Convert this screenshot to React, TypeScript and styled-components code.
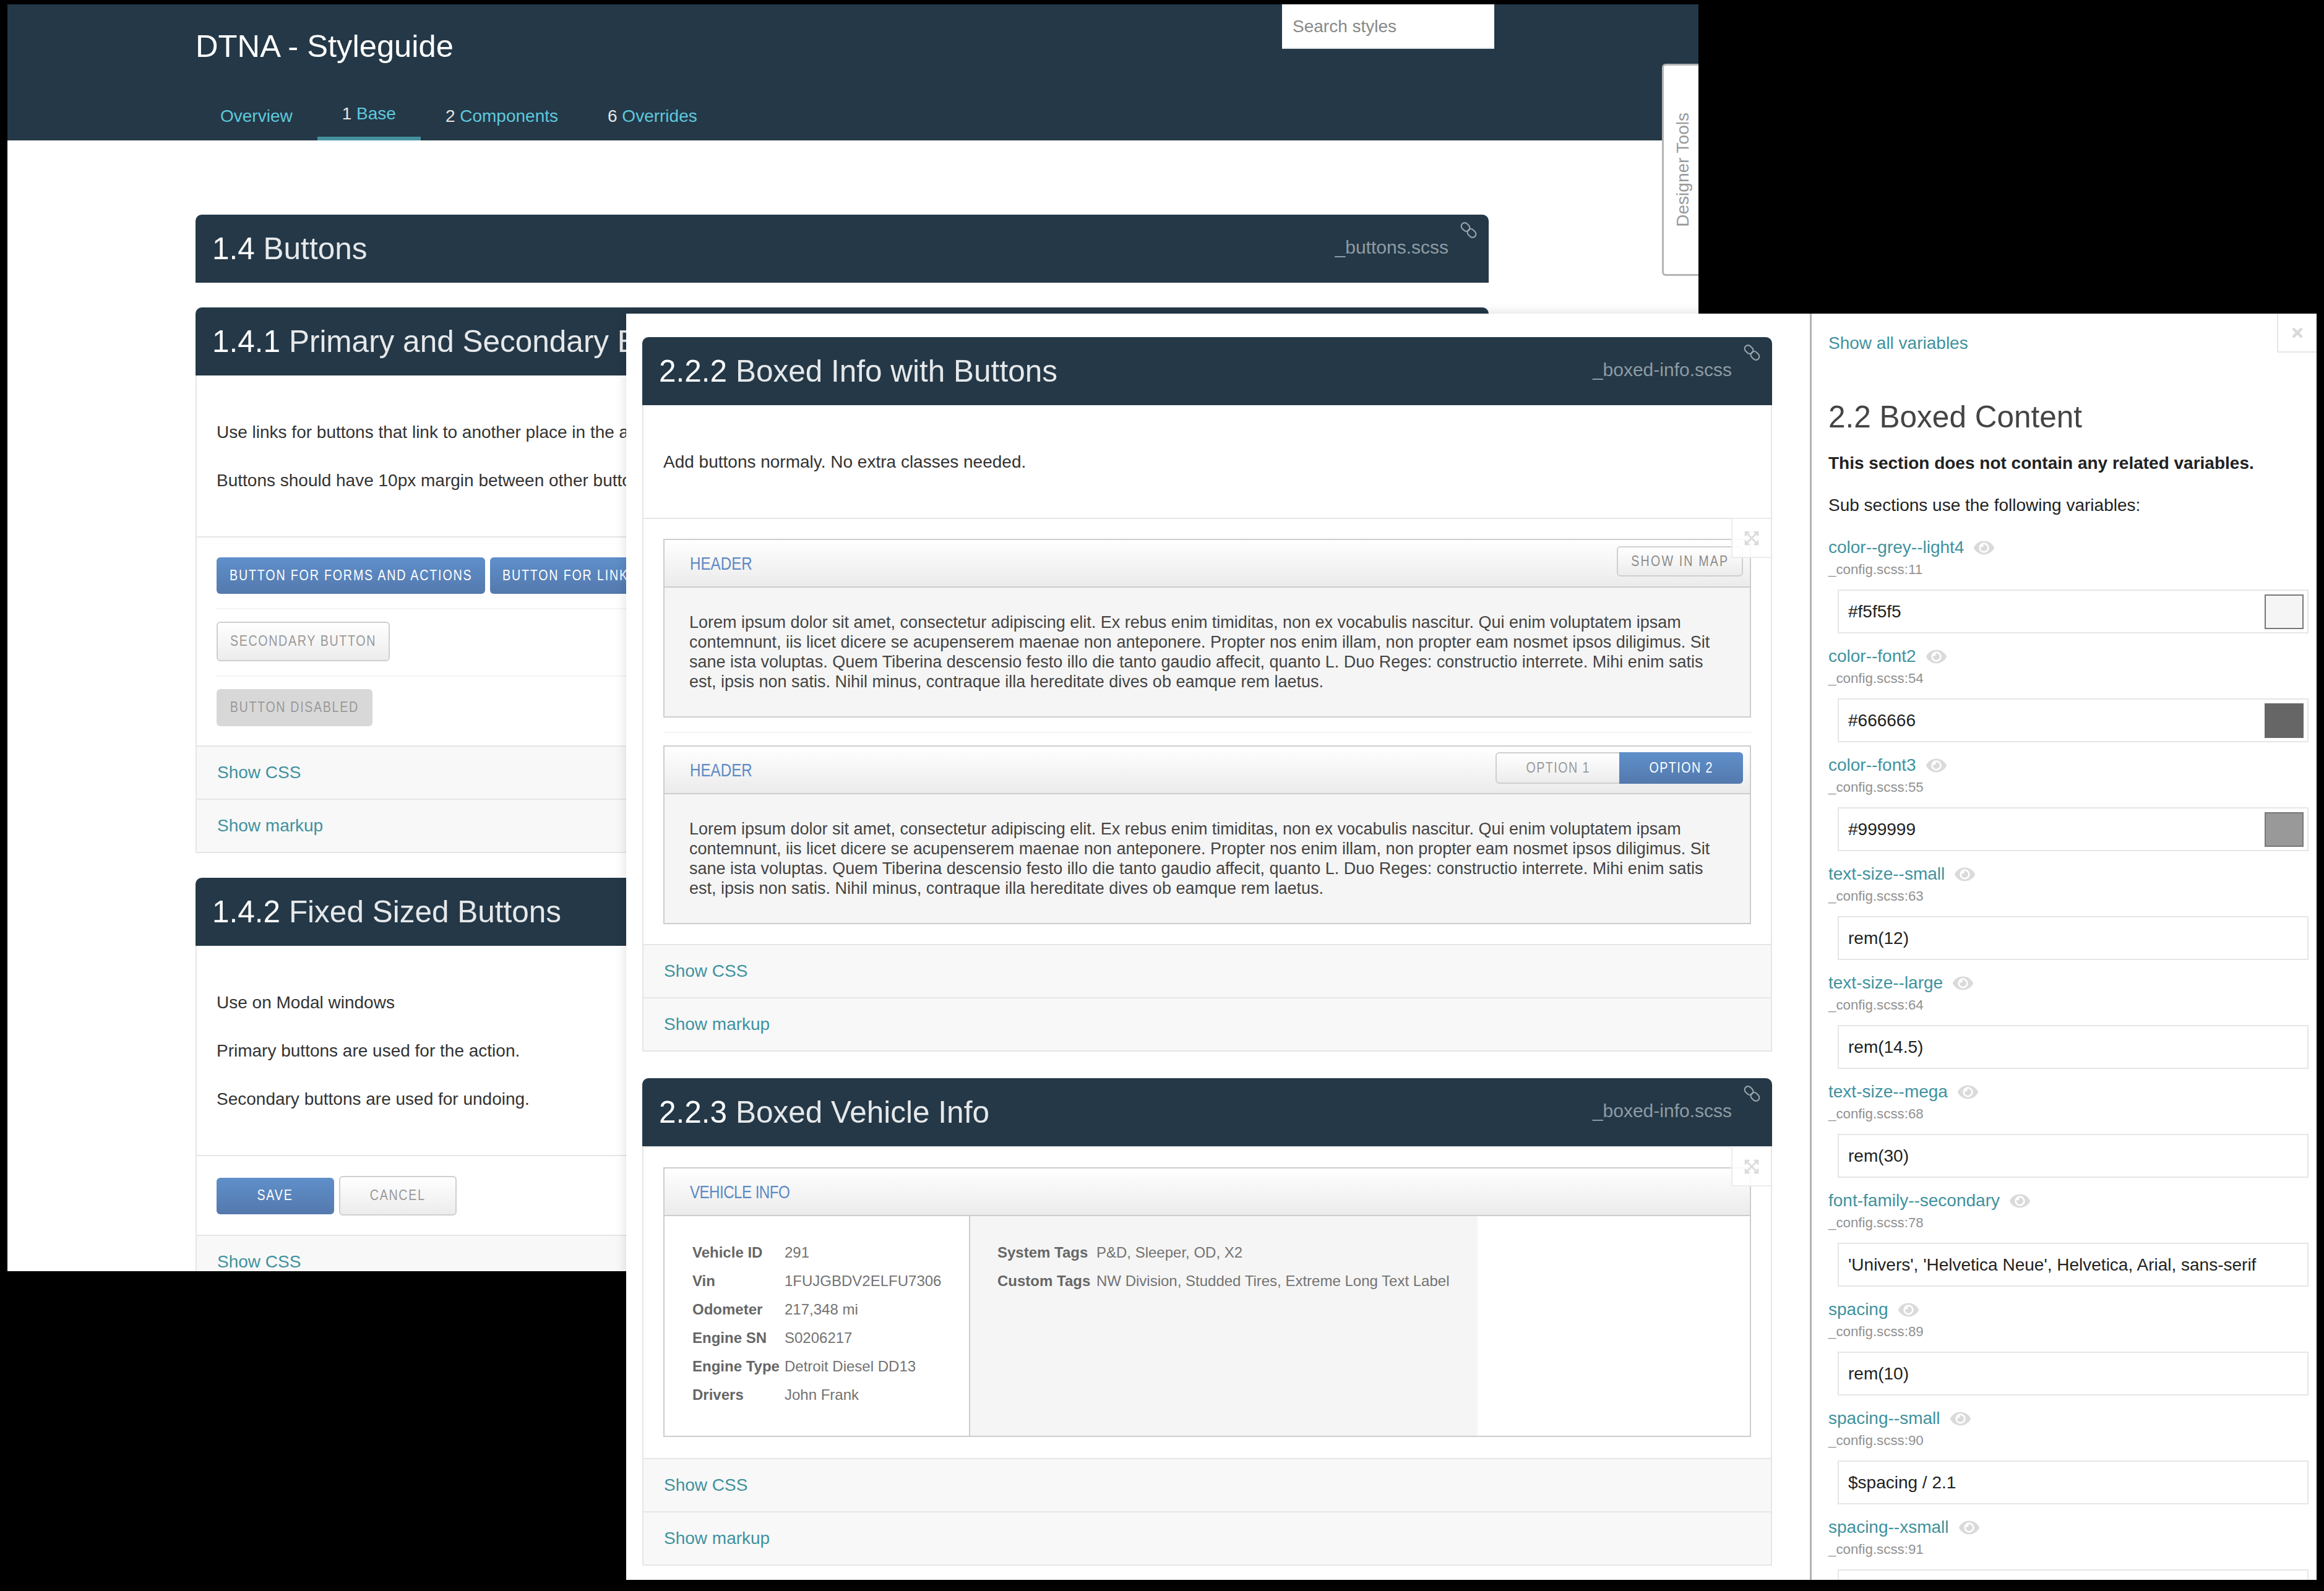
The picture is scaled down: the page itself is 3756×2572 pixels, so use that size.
import React from "react";
import styled, { createGlobalStyle } from "styled-components";
import { FaEye, FaExpandArrowsAlt, FaTimes } from "react-icons/fa";

const GlobalStyle = createGlobalStyle`
    html, body {
        margin: 0;
        padding: 0;
        background: #000;
        font-family: "Liberation Sans", Arial, sans-serif;
    }
    * { box-sizing: border-box; }
`;

const NAVY = "#243847";
const TEAL = "#3f929e";
const LINE = "#e6e6e6";

const Desktop = styled.div`
    position: relative;
    width: 3756px;
    height: 2572px;
    overflow: hidden;
    background: #000;
`;

const BackWindow = styled.div`
    position: absolute;
    left: 12px;
    top: 7px;
    width: 2733px;
    height: 2048px;
    overflow: hidden;
    background: #fff;
`;

const FrontWindow = styled.div`
    position: absolute;
    left: 1012px;
    top: 507px;
    width: 2732px;
    height: 2047px;
    overflow: hidden;
    display: flex;
    background: #fff;
    box-shadow: 0 0 18px rgba(0, 0, 0, 0.14);
`;

const SiteHeader = styled.header`
    height: 220px;
    background: ${NAVY};
    display: flex;
    flex-direction: column;
    justify-content: space-between;
    padding: 0 330px 0 304px;
`;

const TopRow = styled.div`
    display: flex;
    justify-content: space-between;
    align-items: flex-start;
`;

const SiteTitle = styled.h1`
    margin: 38px 0 0;
    font-size: 50.7px;
    line-height: 60px;
    font-weight: 400;
    color: #fff;
`;

const SearchBox = styled.div`
    width: 343px;
    height: 72px;
    background: #fff;
    border-bottom: 2px solid #dfe5e8;
    padding: 2px 0 0 17px;
    display: flex;
    align-items: center;
    font-size: 28px;
    color: #888;
`;

const Nav = styled.nav`
    display: flex;
    align-items: flex-end;
`;

const Tab = styled.a<{ $active?: boolean }>`
    display: block;
    padding: 0 40px ${(p) => (p.$active ? "20px" : "16px")};
    border-bottom: 6px solid ${(p) => (p.$active ? "#46929f" : "transparent")};
    font-size: 28px;
    line-height: 34px;
    color: #5fc9dd;
`;

const TabNumber = styled.span`
    color: #e4e6e8;
`;

const DesignerTab = styled.div`
    position: absolute;
    right: 0;
    top: 96px;
    width: 59px;
    height: 343px;
    background: #fff;
    border: 3px solid #b4b4b4;
    border-right: none;
    border-radius: 6px 0 0 6px;
    display: flex;
    align-items: center;
    justify-content: center;
`;

const DesignerLabel = styled.span`
    writing-mode: vertical-rl;
    transform: rotate(180deg);
    font-size: 28px;
    color: #999;
    white-space: nowrap;
    margin-left: 5px;
`;

const BackMain = styled.main`
    padding: 120px 339px 0 304px;
`;

const Card = styled.section<{ $gap?: number }>`
    position: relative;
    margin-bottom: ${(p) => p.$gap ?? 40}px;
`;

const CardHead = styled.div`
    position: relative;
    height: 110px;
    background: ${NAVY};
    border-radius: 10px 10px 0 0;
    display: flex;
    justify-content: space-between;
    align-items: center;
    padding: 0 65px 0 27px;
`;

const CardTitle = styled.h2`
    margin: 0;
    font-size: 49.5px;
    line-height: 56px;
    font-weight: 400;
    color: #e6e8ea;
    white-space: nowrap;
    overflow: hidden;
`;

const TitleNumber = styled.span`
    color: #fff;
`;

const FileName = styled.span`
    font-size: 30px;
    color: #8f9ba3;
    margin-top: -4px;
`;

const ChainIcon = styled.svg`
    position: absolute;
    right: 19px;
    top: 12px;
    width: 27px;
    height: 26px;
    color: #9aa4ab;
`;

const CardBody = styled.div`
    border: 2px solid ${LINE};
    border-top: none;
`;

const Intro = styled.div`
    padding: 75px 32px 73px;
    font-size: 28px;
    line-height: 34px;
    color: #333;
    white-space: nowrap;
    overflow: hidden;
`;

const Para = styled.p`
    margin: 0 0 44px;
    &:last-child { margin-bottom: 0; }
`;

const Example = styled.div<{ $bottom?: number }>`
    position: relative;
    border-top: 2px solid ${LINE};
    padding: 32px 32px ${(p) => p.$bottom ?? 31}px;
`;

const ButtonRow = styled.div`
    display: flex;
    gap: 8px;
    align-items: center;
    padding-bottom: 23px;
    margin-bottom: 20px;
    border-bottom: 2px solid #f4f4f4;
    white-space: nowrap;
    &:last-child {
        padding-bottom: 0;
        margin-bottom: 0;
        border-bottom: none;
    }
`;

/* no condensed face is installed: squeeze Liberation Sans to the Arial Narrow ratio */
const Condensed = styled.span`
    display: inline-block;
    flex: none;
    margin-top: -2px;
    white-space: nowrap;
    transform: scaleX(0.82);
`;

const PrimaryButton = styled.a<{ $width: number }>`
    display: flex;
    align-items: center;
    justify-content: center;
    flex: none;
    width: ${(p) => p.$width}px;
    height: 59px;
    border-radius: 6px;
    background: linear-gradient(#5f8fca, #5479ad);
    color: #fff;
    font-size: 24px;
    letter-spacing: 2.2px;
`;

const SecondaryButton = styled.a<{ $width: number; $height: number }>`
    display: flex;
    align-items: center;
    justify-content: center;
    flex: none;
    width: ${(p) => p.$width}px;
    height: ${(p) => p.$height}px;
    border: 2px solid #cfcfcf;
    border-radius: 6px;
    background: linear-gradient(#fff, #ececec);
    color: #999;
    font-size: 24px;
    letter-spacing: 2px;
`;

const MapButton = styled(SecondaryButton)`
    margin-top: -6px;
    color: #8c8c8c;
    letter-spacing: 2.6px;
`;

const DisabledButton = styled.span`
    display: flex;
    align-items: center;
    justify-content: center;
    width: 252px;
    height: 60px;
    border-radius: 6px;
    background: #d8d8d8;
    color: #999;
    font-size: 24px;
    letter-spacing: 2px;
`;

const ToggleRow = styled.div`
    height: 86px;
    border-top: 2px solid ${LINE};
    background: #f8f8f8;
    display: flex;
    align-items: center;
    padding-left: 33px;
    font-size: 28px;
    color: ${TEAL};
`;

const ExpandTab = styled.div`
    position: absolute;
    right: 0;
    top: -2px;
    width: 64px;
    height: 65px;
    border: 2px solid #ececec;
    border-right: none;
    background: rgba(255, 255, 255, 0.88);
    display: flex;
    align-items: center;
    justify-content: center;
    color: #dcdcdc;
    font-size: 26px;
    z-index: 2;
`;

const InfoBox = styled.div`
    border: 2px solid #cdcdcd;
    background: #f5f5f5;
`;

const InfoSeparator = styled.div`
    height: 2px;
    background: #f4f4f4;
    margin: 23px 0 20px;
`;

const InfoHead = styled.div`
    height: 77px;
    border-bottom: 2px solid #cdcdcd;
    background: linear-gradient(#fff, #ebebeb);
    display: flex;
    justify-content: space-between;
    align-items: center;
    padding: 0 11px 0 41px;
`;

const InfoTitle = styled(Condensed)<{ $tight?: boolean }>`
    margin-top: 0;
    transform-origin: left center;
    font-size: 29.5px;
    letter-spacing: ${(p) => (p.$tight ? "-0.7px" : "0")};
    color: #5d8ac4;
`;

const InfoText = styled.div`
    padding: 40px;
    font-size: 27px;
    line-height: 32px;
    color: #444;
`;

const Segmented = styled.div`
    display: flex;
    height: 51px;
    margin-top: -6px;
`;

const Segment = styled.span<{ $on?: boolean }>`
    width: 200px;
    display: flex;
    align-items: center;
    justify-content: center;
    font-size: 24px;
    letter-spacing: 1.8px;
    color: ${(p) => (p.$on ? "#fff" : "#999")};
    background: ${(p) => (p.$on ? "linear-gradient(#5f8fca, #5479ad)" : "linear-gradient(#fff, #ececec)")};
    border: ${(p) => (p.$on ? "none" : "2px solid #cfcfcf")};
    border-right: none;
    border-radius: ${(p) => (p.$on ? "0 6px 6px 0" : "6px 0 0 6px")};
`;

const VehicleBody = styled.div`
    display: flex;
    height: 355px;
    background: #fff;
`;

const VehicleMain = styled.div`
    flex: none;
    width: 494px;
    border-right: 2px solid #cdcdcd;
    padding: 36px 0 0 45px;
`;

const VehicleTags = styled.div`
    flex: none;
    width: 820px;
    background: #f5f5f5;
    padding: 36px 0 0 44px;
`;

const SpecGrid = styled.dl<{ $label: number }>`
    margin: 0;
    display: grid;
    grid-template-columns: ${(p) => p.$label}px auto;
    grid-auto-rows: 46px;
    align-items: center;
    font-size: 24px;
    white-space: nowrap;
`;

const SpecLabel = styled.dt`
    font-weight: 700;
    color: #666;
`;

const SpecValue = styled.dd`
    margin: 0;
    color: #737373;
`;

const DocColumn = styled.div`
    flex: none;
    width: 1913px;
    padding: 38px 61px 0 26px;
`;

const VarColumn = styled.aside`
    position: relative;
    flex: 1;
    min-width: 0;
    border-left: 3px solid #b4b4b4;
    padding: 31px 13px 0 27px;
`;

const CloseTab = styled.div`
    position: absolute;
    right: 0;
    top: 0;
    width: 64px;
    height: 63px;
    border-left: 2px solid #e6e6e6;
    border-bottom: 2px solid #e6e6e6;
    display: flex;
    align-items: center;
    justify-content: center;
    color: #d9d9d9;
    font-size: 24px;
`;

const VarLink = styled.a`
    display: block;
    font-size: 28px;
    line-height: 34px;
    color: ${TEAL};
`;

const VarHeading = styled.h2`
    margin: 74px 0 30px;
    font-size: 49.5px;
    line-height: 56px;
    font-weight: 400;
    color: #444;
`;

const VarNote = styled.p<{ $bold?: boolean }>`
    margin: 0 0 34px;
    font-size: 28px;
    line-height: 34px;
    font-weight: ${(p) => (p.$bold ? 700 : 400)};
    color: #222;
`;

const VarItem = styled.div`
    margin-bottom: 20px;
`;

const VarNameRow = styled.div`
    display: flex;
    align-items: center;
    gap: 16px;
    height: 34px;
    font-size: 28px;
    color: ${TEAL};
`;

const EyeWrap = styled.span`
    display: flex;
    color: #dadada;
    font-size: 33px;
`;

const VarFile = styled.div`
    margin-top: 5px;
    font-size: 22.3px;
    line-height: 28px;
    color: #919191;
`;

const VarValue = styled.div`
    margin: 18px 0 0 15px;
    height: 71px;
    border: 2px solid #e6e6e6;
    display: flex;
    align-items: center;
    justify-content: space-between;
    padding: 0 6px 0 15px;
    font-size: 28px;
    color: #222;
    white-space: nowrap;
`;

const Swatch = styled.span<{ $color: string; $edge: string }>`
    width: 63px;
    height: 56px;
    background: ${(p) => p.$color};
    border: 2px solid ${(p) => p.$edge};
`;

const Chain = () => (
    <ChainIcon viewBox="0 0 27 26" fill="none" stroke="currentColor" strokeWidth="2.1">
        <g transform="rotate(45 13.5 13)">
            <rect x="-1" y="7.5" width="15" height="11" rx="5.5" />
            <rect x="13" y="7.5" width="15" height="11" rx="5.5" />
        </g>
    </ChainIcon>
);

const Expand = () => (
    <ExpandTab>
        <FaExpandArrowsAlt />
    </ExpandTab>
);

const Head = ({ num, title, file }: { num: string; title: string; file?: string }) => (
    <CardHead>
        <CardTitle>
            <TitleNumber>{num}</TitleNumber> {title}
        </CardTitle>
        {file ? <FileName>{file}</FileName> : null}
        {file ? <Chain /> : null}
    </CardHead>
);

const Toggles = () => (
    <>
        <ToggleRow>Show CSS</ToggleRow>
        <ToggleRow>Show markup</ToggleRow>
    </>
);

const LOREM =
    "Lorem ipsum dolor sit amet, consectetur adipiscing elit. Ex rebus enim timiditas, non ex vocabulis nascitur. Qui enim voluptatem ipsam contemnunt, iis licet dicere se acupenserem maenae non anteponere. Propter nos enim illam, non propter eam nosmet ipsos diligimus. Sit sane ista voluptas. Quem Tiberina descensio festo illo die tanto gaudio affecit, quanto L. Duo Reges: constructio interrete. Mihi enim satis est, ipsis non satis. Nihil minus, contraque illa hereditate dives ob eamque rem laetus.";

const VEHICLE = [
    ["Vehicle ID", "291"],
    ["Vin", "1FUJGBDV2ELFU7306"],
    ["Odometer", "217,348 mi"],
    ["Engine SN", "S0206217"],
    ["Engine Type", "Detroit Diesel DD13"],
    ["Drivers", "John Frank"],
];

const TAGS = [
    ["System Tags", "P&D, Sleeper, OD, X2"],
    ["Custom Tags", "NW Division, Studded Tires, Extreme Long Text Label"],
];

const VARIABLES: { name: string; file: string; value: string; swatch?: string; edge?: string }[] = [
    { name: "color--grey--light4", file: "_config.scss:11", value: "#f5f5f5", swatch: "#f5f5f5", edge: "#777" },
    { name: "color--font2", file: "_config.scss:54", value: "#666666", swatch: "#666666", edge: "#666" },
    { name: "color--font3", file: "_config.scss:55", value: "#999999", swatch: "#999999", edge: "#777" },
    { name: "text-size--small", file: "_config.scss:63", value: "rem(12)" },
    { name: "text-size--large", file: "_config.scss:64", value: "rem(14.5)" },
    { name: "text-size--mega", file: "_config.scss:68", value: "rem(30)" },
    { name: "font-family--secondary", file: "_config.scss:78", value: "'Univers', 'Helvetica Neue', Helvetica, Arial, sans-serif" },
    { name: "spacing", file: "_config.scss:89", value: "rem(10)" },
    { name: "spacing--small", file: "_config.scss:90", value: "$spacing / 2.1" },
    { name: "spacing--xsmall", file: "_config.scss:91", value: "" },
];

const App = () => {
    return (
        <Desktop>
            <GlobalStyle />
            <BackWindow>
                <SiteHeader>
                    <TopRow>
                        <SiteTitle>DTNA - Styleguide</SiteTitle>
                        <SearchBox>Search styles</SearchBox>
                    </TopRow>
                    <Nav>
                        <Tab>Overview</Tab>
                        <Tab $active><TabNumber>1</TabNumber> Base</Tab>
                        <Tab><TabNumber>2</TabNumber> Components</Tab>
                        <Tab><TabNumber>6</TabNumber> Overrides</Tab>
                    </Nav>
                </SiteHeader>
                <DesignerTab>
                    <DesignerLabel>Designer Tools</DesignerLabel>
                </DesignerTab>
                <BackMain>
                    <Card>
                        <Head num="1.4" title="Buttons" file="_buttons.scss" />
                    </Card>
                    <Card>
                        <Head num="1.4.1" title="Primary and Secondary Buttons" />
                        <CardBody>
                            <Intro>
                                <Para>Use links for buttons that link to another place in the application.</Para>
                                <Para>Buttons should have 10px margin between other buttons.</Para>
                            </Intro>
                            <Example>
                                <ButtonRow>
                                    <PrimaryButton $width={434}><Condensed>BUTTON FOR FORMS AND ACTIONS</Condensed></PrimaryButton>
                                    <PrimaryButton $width={258}><Condensed>BUTTON FOR LINKS</Condensed></PrimaryButton>
                                </ButtonRow>
                                <ButtonRow>
                                    <SecondaryButton $width={280} $height={64}><Condensed>SECONDARY BUTTON</Condensed></SecondaryButton>
                                </ButtonRow>
                                <ButtonRow>
                                    <DisabledButton><Condensed>BUTTON DISABLED</Condensed></DisabledButton>
                                </ButtonRow>
                            </Example>
                            <Toggles />
                        </CardBody>
                    </Card>
                    <Card>
                        <Head num="1.4.2" title="Fixed Sized Buttons" />
                        <CardBody>
                            <Intro>
                                <Para>Use on Modal windows</Para>
                                <Para>Primary buttons are used for the action.</Para>
                                <Para>Secondary buttons are used for undoing.</Para>
                            </Intro>
                            <Example>
                                <ButtonRow>
                                    <PrimaryButton $width={190}><Condensed>SAVE</Condensed></PrimaryButton>
                                    <SecondaryButton $width={190} $height={64}><Condensed>CANCEL</Condensed></SecondaryButton>
                                </ButtonRow>
                            </Example>
                            <Toggles />
                        </CardBody>
                    </Card>
                </BackMain>
            </BackWindow>

            <FrontWindow>
                <DocColumn>
                    <Card $gap={43}>
                        <Head num="2.2.2" title="Boxed Info with Buttons" file="_boxed-info.scss" />
                        <CardBody>
                            <Intro>
                                <Para>Add buttons normaly. No extra classes needed.</Para>
                            </Intro>
                            <Example $bottom={32}>
                                <Expand />
                                <InfoBox>
                                    <InfoHead>
                                        <InfoTitle>HEADER</InfoTitle>
                                        <MapButton $width={204} $height={49}><Condensed>SHOW IN MAP</Condensed></MapButton>
                                    </InfoHead>
                                    <InfoText>{LOREM}</InfoText>
                                </InfoBox>
                                <InfoSeparator />
                                <InfoBox>
                                    <InfoHead>
                                        <InfoTitle>HEADER</InfoTitle>
                                        <Segmented>
                                            <Segment><Condensed>OPTION 1</Condensed></Segment>
                                            <Segment $on><Condensed>OPTION 2</Condensed></Segment>
                                        </Segmented>
                                    </InfoHead>
                                    <InfoText>{LOREM}</InfoText>
                                </InfoBox>
                            </Example>
                            <Toggles />
                        </CardBody>
                    </Card>
                    <Card>
                        <Head num="2.2.3" title="Boxed Vehicle Info" file="_boxed-info.scss" />
                        <CardBody>
                            <Example $bottom={34}>
                                <Expand />
                                <InfoBox>
                                    <InfoHead>
                                        <InfoTitle $tight>VEHICLE INFO</InfoTitle>
                                    </InfoHead>
                                    <VehicleBody>
                                        <VehicleMain>
                                            <SpecGrid $label={149}>
                                                {VEHICLE.map(([label, value]) => (
                                                    <React.Fragment key={label}>
                                                        <SpecLabel>{label}</SpecLabel>
                                                        <SpecValue>{value}</SpecValue>
                                                    </React.Fragment>
                                                ))}
                                            </SpecGrid>
                                        </VehicleMain>
                                        <VehicleTags>
                                            <SpecGrid $label={160}>
                                                {TAGS.map(([label, value]) => (
                                                    <React.Fragment key={label}>
                                                        <SpecLabel>{label}</SpecLabel>
                                                        <SpecValue>{value}</SpecValue>
                                                    </React.Fragment>
                                                ))}
                                            </SpecGrid>
                                        </VehicleTags>
                                    </VehicleBody>
                                </InfoBox>
                            </Example>
                            <Toggles />
                        </CardBody>
                    </Card>
                </DocColumn>
                <VarColumn>
                    <CloseTab>
                        <FaTimes />
                    </CloseTab>
                    <VarLink>Show all variables</VarLink>
                    <VarHeading>2.2 Boxed Content</VarHeading>
                    <VarNote $bold>This section does not contain any related variables.</VarNote>
                    <VarNote>Sub sections use the following variables:</VarNote>
                    {VARIABLES.map((v) => (
                        <VarItem key={v.name}>
                            <VarNameRow>
                                {v.name}
                                <EyeWrap><FaEye /></EyeWrap>
                            </VarNameRow>
                            <VarFile>{v.file}</VarFile>
                            <VarValue>
                                {v.value}
                                {v.swatch ? <Swatch $color={v.swatch} $edge={v.edge || "#777"} /> : null}
                            </VarValue>
                        </VarItem>
                    ))}
                </VarColumn>
            </FrontWindow>
        </Desktop>
    );
};

export default App;
